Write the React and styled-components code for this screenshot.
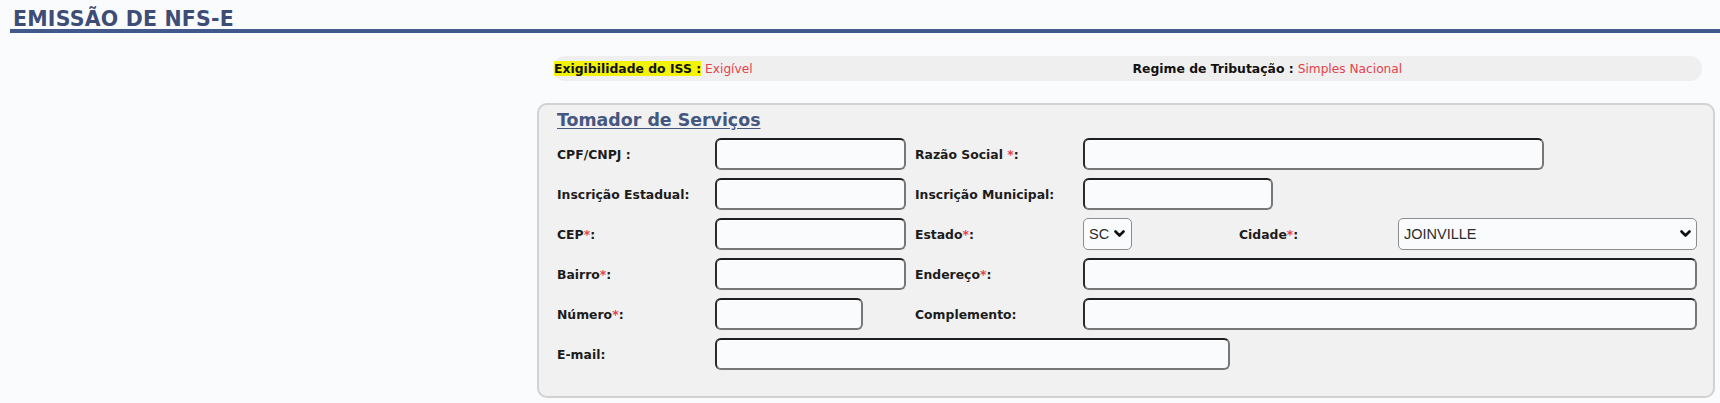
import React from 'react';
import styled, { createGlobalStyle } from 'styled-components';

const theme = {
  page: '#fafbfd',
  navy: '#3d4d78',
  rule: '#42598b',
  bar: '#efefef',
  panel: '#f1f1f1',
  panelBorder: '#d2d2d2',
  red: '#e5414c',
  text: '#222',
};

const GlobalStyle = createGlobalStyle`
  html, body {
    margin: 0;
    padding: 0;
    background: ${theme.page};
  }
  body {
    font-family: "DejaVu Sans", Verdana, sans-serif;
    color: ${theme.text};
  }
`;

const Header = styled.header`
  margin-left: 10px;
  border-bottom: 4px solid ${theme.rule};
`;

const PageTitle = styled.h1`
  margin: 0;
  padding: 9px 0 0 3px;
  font-size: 20.5px;
  line-height: 20px;
  font-weight: bold;
  letter-spacing: 0.2px;
  color: ${theme.navy};
`;

const Layout = styled.div`
  display: grid;
  grid-template-columns: 537px 1fr;
  padding-right: 5px;
`;

const Sidebar = styled.aside``;

const Content = styled.main`
  padding-top: 23px;
`;

const InfoBar = styled.div`
  display: grid;
  grid-template-columns: 1fr 1fr;
  align-items: center;
  height: 25px;
  margin: 0 13px 0 16px;
  background: ${theme.bar};
  border-radius: 12px;
  font-size: 12.4px;
`;

const InfoItem = styled.div`
  padding-left: ${(p) => (p.$inset ? '5px' : '1px')};
  white-space: nowrap;
`;

const InfoKey = styled.span`
  font-weight: bold;
  color: #111;
  background: ${(p) => (p.$mark ? '#f3f20a' : 'transparent')};
`;

const InfoValue = styled.span`
  font-size: 12.2px;
  color: ${theme.red};
`;

const Panel = styled.fieldset`
  margin: 22px 0 0 0;
  padding: 0 16px 22px 18px;
  background: ${theme.panel};
  border: 2px solid ${theme.panelBorder};
  border-radius: 10px;
  min-width: 0;
`;

const PanelTitle = styled.a`
  display: block;
  padding: 5px 0 4px;
  font-size: 17.4px;
  line-height: 20px;
  font-weight: bold;
  color: #45577f;
  text-decoration: underline;
  text-underline-offset: 2px;
`;

const FormGrid = styled.div`
  display: grid;
  grid-template-columns: 158px 200px 168px 156px 159px 1fr;
  grid-auto-rows: 40px;
  align-items: center;
`;

const Label = styled.label`
  font-size: 12.4px;
  font-weight: bold;
  color: #1c1c1c;
  white-space: nowrap;
`;

const Req = styled.span`
  color: ${theme.red};
`;

const Cell = styled.div`
  grid-column: span ${(p) => p.$span || 1};
  display: flex;
  align-items: center;
  min-width: 0;
`;

const TextInput = styled.input`
  box-sizing: border-box;
  width: ${(p) => p.$width || '100%'};
  height: 32px;
  padding: 0 6px;
  background: ${theme.page};
  border-width: 2px;
  border-style: solid;
  border-color: #1e1e1e #777 #777 #2a2a2a;
  border-radius: 6px;
  font-family: "Liberation Sans", Arial, sans-serif;
  font-size: 14px;
  outline: none;
`;

const SelectWrap = styled.div`
  position: relative;
  width: ${(p) => p.$width || '100%'};
  height: 32px;
`;

const Select = styled.select`
  box-sizing: border-box;
  appearance: none;
  width: 100%;
  height: 32px;
  padding: 0 0 0 5px;
  background: ${theme.page};
  border: 1px solid #8d8d8d;
  border-radius: 5px;
  font-family: "Liberation Sans", Arial, sans-serif;
  font-size: 14.5px;
  color: #2b2b2b;
  outline: none;
`;

const Chevron = styled.svg`
  position: absolute;
  top: 12px;
  right: ${(p) => p.$right || 6}px;
  width: 11px;
  height: 8px;
  pointer-events: none;
`;

const Dropdown = ({ width, value, chevronRight }) => (
  <SelectWrap $width={width}>
    <Select defaultValue={value}>
      <option value={value}>{value}</option>
    </Select>
    <Chevron viewBox="0 0 11 8" $right={chevronRight}>
      <polyline points="1.5,1.5 5.5,5.5 9.5,1.5" fill="none" stroke="#111" strokeWidth="2.6" strokeLinecap="round" strokeLinejoin="round" />
    </Chevron>
  </SelectWrap>
);

const Field = ({ label, required, suffix = ':' }) => (
  <Label>
    {label}
    {required && <Req>*</Req>}
    {suffix}
  </Label>
);

export default function App() {
  return (
    <>
      <GlobalStyle />
      <Header>
        <PageTitle>EMISSÃO DE NFS-E</PageTitle>
      </Header>
      <Layout>
        <Sidebar />
        <Content>
          <InfoBar>
            <InfoItem>
              <InfoKey $mark>Exigibilidade do ISS :</InfoKey> <InfoValue>Exigível</InfoValue>
            </InfoItem>
            <InfoItem $inset>
              <InfoKey>Regime de Tributação :</InfoKey> <InfoValue>Simples Nacional</InfoValue>
            </InfoItem>
          </InfoBar>

          <Panel>
            <PanelTitle>Tomador de Serviços</PanelTitle>
            <FormGrid>
              <Field label="CPF/CNPJ :" suffix="" />
              <Cell><TextInput $width="191px" /></Cell>
              <Label>Razão Social <Req>*</Req>:</Label>
              <Cell $span={3}><TextInput $width="461px" /></Cell>

              <Field label="Inscrição Estadual" />
              <Cell><TextInput $width="191px" /></Cell>
              <Field label="Inscrição Municipal" />
              <Cell $span={3}><TextInput $width="190px" /></Cell>

              <Field label="CEP" required />
              <Cell><TextInput $width="191px" /></Cell>
              <Field label="Estado" required />
              <Cell><Dropdown width="49px" value="SC" chevronRight={7} /></Cell>
              <Field label="Cidade" required />
              <Cell><Dropdown value="JOINVILLE" chevronRight={6} /></Cell>

              <Field label="Bairro" required />
              <Cell><TextInput $width="191px" /></Cell>
              <Field label="Endereço" required />
              <Cell $span={3}><TextInput /></Cell>

              <Field label="Número" required />
              <Cell><TextInput $width="148px" /></Cell>
              <Field label="Complemento" />
              <Cell $span={3}><TextInput /></Cell>

              <Field label="E-mail" />
              <Cell $span={3}><TextInput $width="515px" /></Cell>
            </FormGrid>
          </Panel>
        </Content>
      </Layout>
    </>
  );
}
